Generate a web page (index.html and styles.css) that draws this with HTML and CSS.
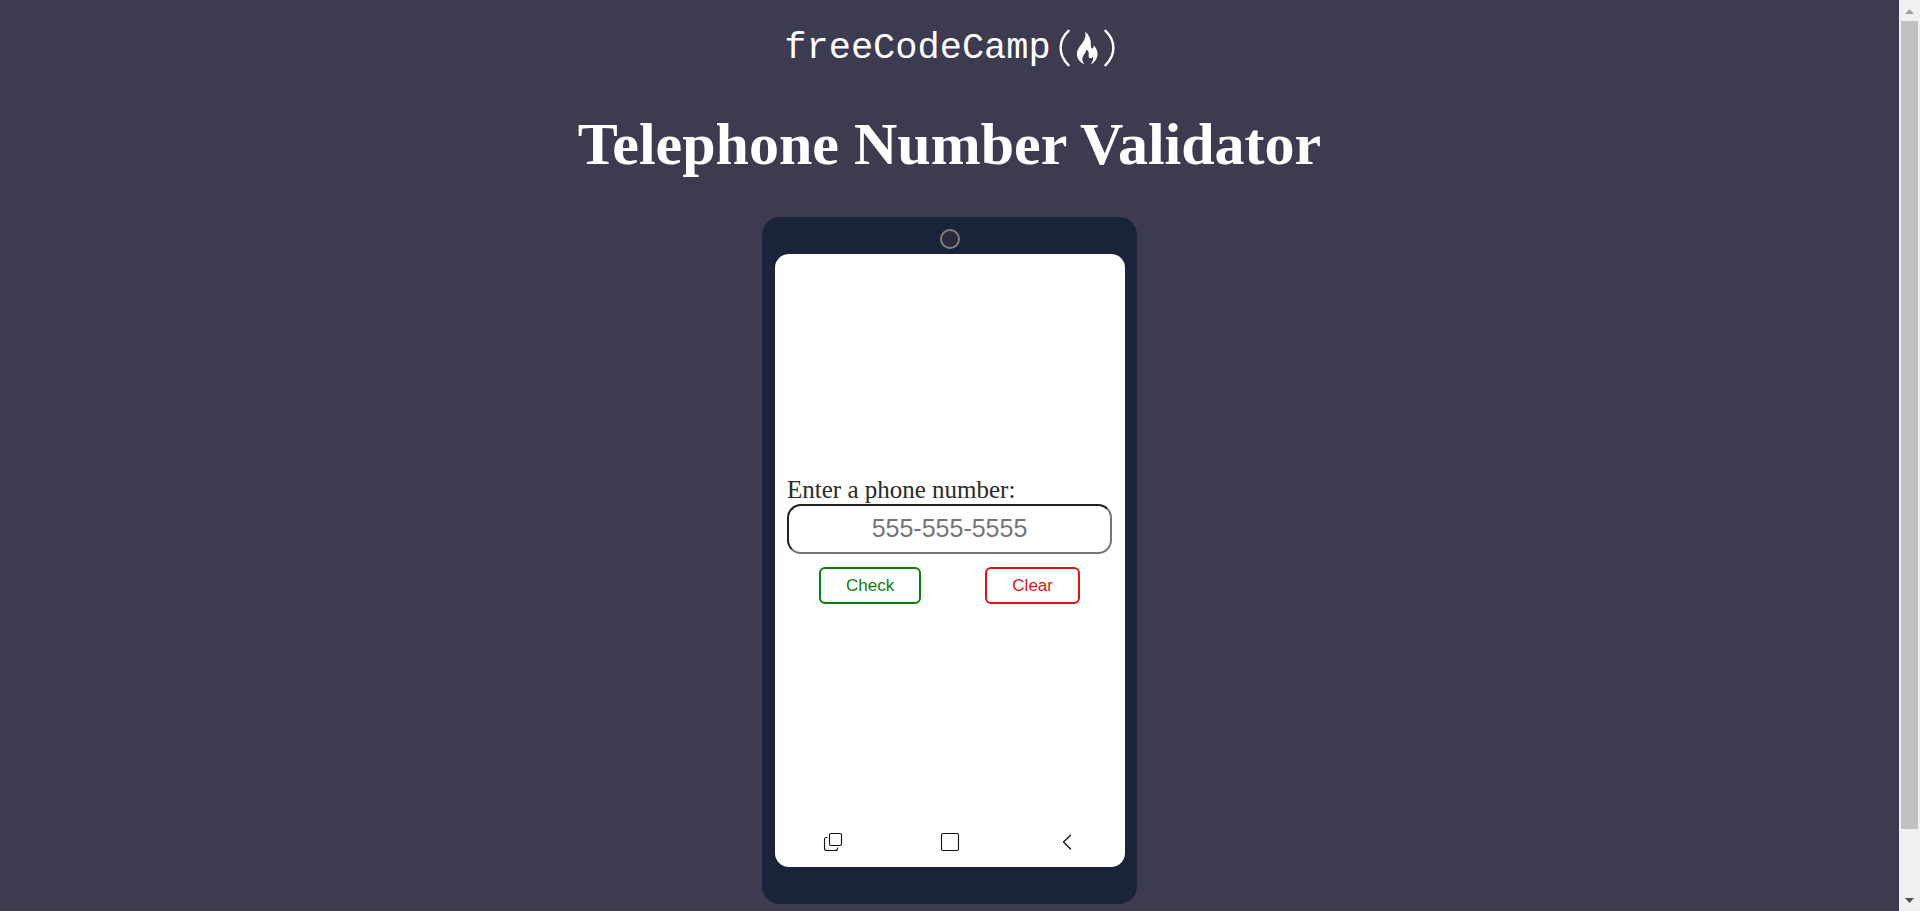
FILE: index.html
```html
<!DOCTYPE html>
<html lang="en">
<head>
<meta charset="utf-8">
<meta name="viewport" content="width=device-width, initial-scale=1">
<title>Telephone Number Validator</title>
<link rel="stylesheet" href="styles.css">
</head>
<body>
<div class="viewport">
  <main class="page">
    <div class="logo">
      <span class="logo-text">freeCodeCamp</span>
      <svg class="logo-mark" width="56" height="40" viewBox="0 0 56 40" aria-hidden="true">
        <g fill="none" stroke="#fff" stroke-width="2.4" stroke-linecap="round">
          <path d="M9.500 2.800C-1 12.500-1 27 9.500 37.200"/>
          <path d="M46.500 2.800C57 12.500 57 27 46.500 37.200"/>
        </g>
        <path fill="#fff" d="M26.200 3.500C30.500 7.500 32 11.500 31.800 15.500C31.700 18.500 32 20.400 33.200 20.400C34.600 20.400 34.900 18.800 34.200 17.200C37.200 19.500 38.700 22.500 38.500 26.500C38.300 31 35.500 34.500 31.500 36.500C34 33.500 34.800 31 33.600 28.800C33 30 32.200 30.500 31 30.200C29.200 29.700 29.600 27.600 29.700 25.800C29.800 23.800 28.900 22.400 27 21.600C27.600 25 23.600 27 23.300 31C23.200 33 24.100 34.800 25.800 36.400C21.500 34.800 17.800 31.100 17.900 26C18 21.500 20.600 18.600 23 15.500C25.500 12.200 27.200 8.300 26.200 3.500Z"/>
      </svg>
    </div>
    <h1 class="title">Telephone Number Validator</h1>
    <div class="phone">
      <div class="camera"></div>
      <form class="screen">
        <div class="form">
          <label class="label" for="user-input">Enter a phone number:</label>
          <input class="input" id="user-input" type="text" maxlength="20" placeholder="555-555-5555">
          <div class="actions">
            <button class="btn btn-check" type="button">Check</button>
            <button class="btn btn-clear" type="button">Clear</button>
          </div>
        </div>
        <div class="nav">
          <svg width="20" height="20" viewBox="0 0 20 20" fill="none" stroke="#111" stroke-width="1.100" aria-hidden="true">
            <rect x="6.500" y="1.500" width="12" height="12" rx="1.500"/>
            <path d="M4.500 5.500H3.500Q1.500 5.500 1.500 7.500V16.500Q1.500 18.500 3.500 18.500H12.500Q14.500 18.500 14.500 16.500V15.500"/>
          </svg>
          <svg width="20" height="20" viewBox="0 0 20 20" fill="none" stroke="#111" stroke-width="1.100" aria-hidden="true">
            <rect x="1.500" y="1.500" width="17" height="17" rx="1.500"/>
          </svg>
          <svg width="20" height="20" viewBox="0 0 20 20" fill="none" stroke="#111" stroke-width="1.300" stroke-linecap="round" stroke-linejoin="round" aria-hidden="true">
            <path d="M13.500 3.200L6.500 10L13.500 17"/>
          </svg>
        </div>
      </form>
    </div>
  </main>
  <div class="scrollbar" aria-hidden="true">
    <svg class="arrow" width="21" height="21" viewBox="0 0 21 21"><path fill="#a3a3a3" d="M6 14L10.500 9L15 14Z"/></svg>
    <div class="track"><div class="thumb"></div></div>
    <svg class="arrow" width="21" height="21" viewBox="0 0 21 21"><path fill="#505050" d="M6 8H15L10.500 13Z"/></svg>
  </div>
</div>
</body>
</html>
```
FILE: styles.css
```css
* {
  box-sizing: border-box;
}

body {
  margin: 0;
  background: #3d3b50;
  color: #fff;
  font-family: "Liberation Serif", "Times New Roman", serif;
}

.viewport {
  display: flex;
  height: 100vh;
  overflow: hidden;
}

.page {
  flex: 1;
  display: flex;
  flex-direction: column;
  align-items: center;
  padding-top: 24px;
}

.logo {
  display: flex;
  align-items: center;
  gap: 8px;
  height: 48px;
}

.logo-text {
  font: 37px/48px "Liberation Mono", "Courier New", monospace;
}

.title {
  margin: 40px 0;
  font-size: 60px;
  line-height: 65px;
  font-weight: bold;
  text-align: center;
}

.phone {
  display: flex;
  flex-direction: column;
  align-items: center;
  gap: 5px;
  flex-shrink: 0;
  width: 375px;
  padding: 12px 12px 37px 13px;
  border-radius: 18px;
  background: #19243a;
}

.camera {
  width: 20px;
  height: 20px;
  border: 2px solid #808080;
  border-radius: 50%;
  background: #2a2a3a;
}

.screen {
  display: flex;
  flex-direction: column;
  width: 100%;
  height: 613px;
  border-radius: 14px;
  background: #fff;
}

.form {
  flex: 1;
  display: flex;
  flex-direction: column;
  justify-content: center;
  padding: 0 13px 7px 12px;
}

.label {
  color: #2a2a2a;
  font-size: 25px;
  line-height: 28px;
}

.input {
  width: 100%;
  height: 50px;
  border: 2px inset #767676;
  border-radius: 14px;
  background: #fff;
  font: 25px "Liberation Sans", Arial, sans-serif;
  text-align: center;
}

.input::placeholder {
  color: #757575;
}

.actions {
  display: flex;
  justify-content: space-around;
  margin-top: 13px;
}

.btn {
  padding: 7px 25px;
  border: 2px solid;
  border-radius: 6px;
  background: #fff;
  font: 17px/19px "Liberation Sans", Arial, sans-serif;
}

.btn-check {
  border-color: #0b7d0b;
  color: #0b7d0b;
}

.btn-clear {
  border-color: #dc1414;
  color: #dc1414;
}

.nav {
  display: grid;
  grid-template-columns: repeat(3, 1fr);
  justify-items: center;
  padding-bottom: 15px;
}

.scrollbar {
  display: flex;
  flex-direction: column;
  width: 21px;
  background: #f1f1f1;
}

.track {
  flex: 1;
  padding: 0 2px;
}

.thumb {
  height: 93%;
  background: #c1c1c1;
}
```
